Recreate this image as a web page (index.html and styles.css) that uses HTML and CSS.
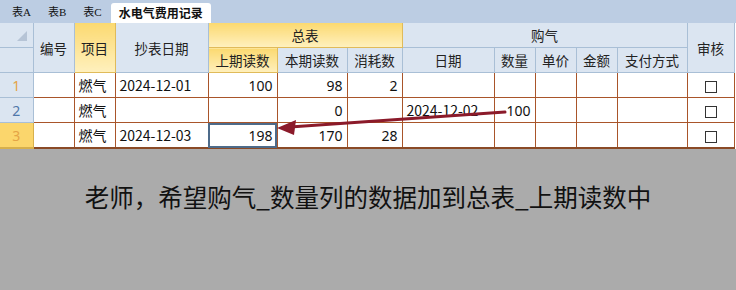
FILE: index.html
```html
<!DOCTYPE html>
<html lang="zh-CN">
<head>
    <meta charset="UTF-8">
    <title>水电气费用记录</title>
    <link rel="stylesheet" href="styles.css">
</head>
<body>

<div class="sheet">
    <div class="tabs">
        <span class="tab">表A</span>
        <span class="tab">表B</span>
        <span class="tab">表C</span>
        <span class="tab active">水电气费用记录</span>
    </div>

    <table class="grid">
        <colgroup>
            <col style="width:33px"><col style="width:41px"><col style="width:41px"><col style="width:93px">
            <col style="width:69px"><col style="width:70px"><col style="width:55px"><col style="width:92px">
            <col style="width:41px"><col style="width:41px"><col style="width:41px"><col style="width:70px">
            <col style="width:47px">
        </colgroup>
        <thead>
            <tr>
                <th class="corner"><span class="tri"></span></th>
                <th rowspan="2">编号</th>
                <th rowspan="2" class="sel">项目</th>
                <th rowspan="2">抄表日期</th>
                <th colspan="3" class="sel">总表</th>
                <th colspan="5">购气</th>
                <th rowspan="2">审核</th>
            </tr>
            <tr>
                <th class="corner"></th>
                <th class="sel">上期读数</th>
                <th>本期读数</th>
                <th>消耗数</th>
                <th>日期</th>
                <th>数量</th>
                <th>单价</th>
                <th>金额</th>
                <th>支付方式</th>
            </tr>
        </thead>
        <tbody>
            <tr>
                <td class="rh odd">1</td>
                <td></td><td>燃气</td><td>2024-12-01</td>
                <td class="num">100</td><td class="num">98</td><td class="num">2</td>
                <td></td><td></td><td></td><td></td><td></td>
                <td class="chk"><span class="box"></span></td>
            </tr>
            <tr>
                <td class="rh">2</td>
                <td></td><td>燃气</td><td></td>
                <td class="num"></td><td class="num">0</td><td class="num"></td>
                <td>2024-12-02</td><td class="num">100</td><td></td><td></td><td></td>
                <td class="chk"><span class="box"></span></td>
            </tr>
            <tr class="last">
                <td class="rh odd cur">3</td>
                <td></td><td>燃气</td><td>2024-12-03</td>
                <td class="num active-cell">198</td><td class="num">170</td><td class="num">28</td>
                <td></td><td></td><td></td><td></td><td></td>
                <td class="chk"><span class="box"></span></td>
            </tr>
        </tbody>
    </table>

    <svg class="arrow" width="736" height="160" viewBox="0 0 736 160">
        <line x1="505" y1="112" x2="290" y2="127" stroke="#8b1a2a" stroke-width="3" stroke-linecap="round"/>
        <polygon points="277,128 296,120 294,135" fill="#8b1a2a"/>
    </svg>
</div>

<p class="note">老师，希望购气_数量列的数据加到总表_上期读数中</p>

</body>
</html>
```

FILE: styles.css
```css
body {
    margin: 0;
    background: #ababab;
    font-family: "Noto Sans", "Noto Sans CJK SC", sans-serif;
}
.sheet {
    position: relative;
    background: #ffffff;
    width: 736px;
}
.tabs {
    display: flex;
    align-items: flex-end;
    height: 23px;
    padding-left: 4px;
    background: #bccde3;
    box-sizing: border-box;
}
.tab {
    font-family: "Liberation Serif", "Noto Sans CJK SC", serif;
    font-size: 11px;
    color: #111;
    padding: 0 9px 0 8px;
    line-height: 20px;
    margin-bottom: 1px;
}
.tab.active {
    background: #fff;
    font-family: "Noto Sans CJK SC", sans-serif;
    font-weight: bold;
    font-size: 12px;
    padding: 0 8px;
    border-radius: 3px 3px 0 0;
    line-height: 20px;
    margin-bottom: 0;
}
.grid {
    border-collapse: collapse;
    table-layout: fixed;
    width: 734px;
    font-size: 13.5px;
    font-family: "Noto Sans CJK SC", sans-serif;
}
.grid th {
    height: 24px;
    padding: 0;
    font-weight: normal;
    color: #222;
    background: #dbe5f1;
    border: 1px solid #a9bfd6;
    text-align: center;
}
.grid th.sel {
    background: linear-gradient(#fbd970, #fff0bd);
    border-color: #e0bb5a;
}
.grid thead tr:first-child th {
    border-top: none;
}
.grid th.corner {
    position: relative;
    border-left: none;
}
.tri {
    position: absolute;
    right: 6px;
    bottom: 6px;
    width: 0;
    height: 0;
    border-left: 10px solid transparent;
    border-bottom: 10px solid #b6c4d6;
}
.grid td {
    height: 24px;
    padding: 0 4px;
    border: 1px solid #a9552a;
    color: #111;
    font-size: 14px;
    white-space: nowrap;
    overflow: visible;
}
.grid td.num {
    text-align: right;
    font-family: "Noto Sans", sans-serif;
}
.grid td.rh {
    text-align: center;
    background: #dbe5f1;
    border: 1px solid #a9bfd6;
    border-left: none;
    color: #4f77aa;
    font-family: "Noto Sans", sans-serif;
}
.grid td.rh.odd {
    color: #e4a446;
}
.grid td.rh.cur {
    background: #fbd66c;
    border-color: #d7b04c;
}
.grid tr.last td {
    border-bottom: 2px solid #8a4a26;
}
.grid td.active-cell {
    outline: 2px solid #4d6b8a;
    outline-offset: -2px;
}
.chk {
    text-align: center;
}
.box {
    display: inline-block;
    width: 10px;
    height: 10px;
    border: 1px solid #333;
    vertical-align: middle;
}
.arrow {
    position: absolute;
    left: 0;
    top: 0;
    pointer-events: none;
}
.note {
    margin: 0;
    padding-top: 30px;
    text-align: center;
    font-family: "Noto Sans CJK SC", sans-serif;
    font-size: 24.5px;
    color: #111;
}
```
